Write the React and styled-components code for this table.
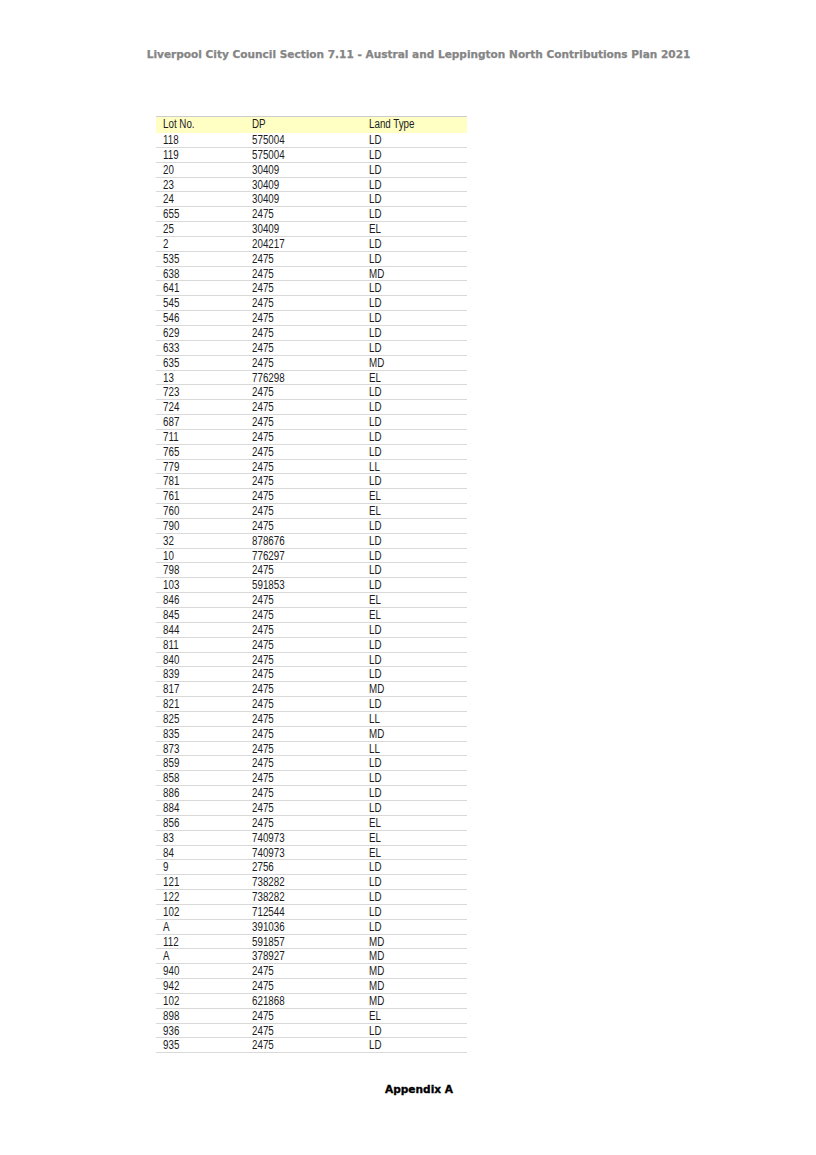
import React from 'react'
import styled, { createGlobalStyle } from 'styled-components'

const rows = [
  ['118', '575004', 'LD'],
  ['119', '575004', 'LD'],
  ['20', '30409', 'LD'],
  ['23', '30409', 'LD'],
  ['24', '30409', 'LD'],
  ['655', '2475', 'LD'],
  ['25', '30409', 'EL'],
  ['2', '204217', 'LD'],
  ['535', '2475', 'LD'],
  ['638', '2475', 'MD'],
  ['641', '2475', 'LD'],
  ['545', '2475', 'LD'],
  ['546', '2475', 'LD'],
  ['629', '2475', 'LD'],
  ['633', '2475', 'LD'],
  ['635', '2475', 'MD'],
  ['13', '776298', 'EL'],
  ['723', '2475', 'LD'],
  ['724', '2475', 'LD'],
  ['687', '2475', 'LD'],
  ['711', '2475', 'LD'],
  ['765', '2475', 'LD'],
  ['779', '2475', 'LL'],
  ['781', '2475', 'LD'],
  ['761', '2475', 'EL'],
  ['760', '2475', 'EL'],
  ['790', '2475', 'LD'],
  ['32', '878676', 'LD'],
  ['10', '776297', 'LD'],
  ['798', '2475', 'LD'],
  ['103', '591853', 'LD'],
  ['846', '2475', 'EL'],
  ['845', '2475', 'EL'],
  ['844', '2475', 'LD'],
  ['811', '2475', 'LD'],
  ['840', '2475', 'LD'],
  ['839', '2475', 'LD'],
  ['817', '2475', 'MD'],
  ['821', '2475', 'LD'],
  ['825', '2475', 'LL'],
  ['835', '2475', 'MD'],
  ['873', '2475', 'LL'],
  ['859', '2475', 'LD'],
  ['858', '2475', 'LD'],
  ['886', '2475', 'LD'],
  ['884', '2475', 'LD'],
  ['856', '2475', 'EL'],
  ['83', '740973', 'EL'],
  ['84', '740973', 'EL'],
  ['9', '2756', 'LD'],
  ['121', '738282', 'LD'],
  ['122', '738282', 'LD'],
  ['102', '712544', 'LD'],
  ['A', '391036', 'LD'],
  ['112', '591857', 'MD'],
  ['A', '378927', 'MD'],
  ['940', '2475', 'MD'],
  ['942', '2475', 'MD'],
  ['102', '621868', 'MD'],
  ['898', '2475', 'EL'],
  ['936', '2475', 'LD'],
  ['935', '2475', 'LD'],
]

const GlobalStyle = createGlobalStyle`
  html, body {
    margin: 0;
    padding: 0;
    background: #ffffff;
  }
`

const Page = styled.div`
  width: 816px;
  height: 1155px;
  display: flex;
  flex-direction: column;
  align-items: center;
  background: #ffffff;
`

const RunningHead = styled.div`
  margin-top: 47px;
  margin-left: 21px;
  font-family: 'DejaVu Sans', Verdana, sans-serif;
  font-weight: bold;
  font-size: 10.55px;
  line-height: 15px;
  color: #858585;
  white-space: nowrap;
  -webkit-text-stroke: 0.25px #858585;
`

const Sheet = styled.div`
  margin-top: 54px;
  margin-left: -194px;
  width: 311px;
  border-top: 1px solid #cdcdcd;
  font-family: 'Liberation Sans Narrow', 'Arial Narrow', 'Liberation Sans', sans-serif;
  font-size: 12px;
  color: #1c1c1c;
`

const Row = styled.div`
  display: grid;
  grid-template-columns: 89px 117px 1fr;
  height: ${(p) => (p.$head ? '16px' : '14.85px')};
  align-items: center;
  background: ${(p) => (p.$head ? '#ffffc4' : 'transparent')};
  border-bottom: 1px solid ${(p) => (p.$head ? '#ffffc4' : '#d9d9d9')};
  box-sizing: border-box;
`

const Cell = styled.div`
  padding-left: 7px;
  padding-top: ${(p) => (p.$head ? '0' : '1px')};
  line-height: 13px;
  white-space: nowrap;
`

const Narrow = styled.span`
  display: inline-block;
  transform: scaleX(0.815);
  transform-origin: left center;
`

const Footer = styled.div`
  margin-top: auto;
  margin-bottom: 60px;
  margin-left: 22px;
  font-family: 'DejaVu Sans', Verdana, sans-serif;
  font-weight: 900;
  font-size: 10.6px;
  color: #000000;
  -webkit-text-stroke: 0.3px #000000;
`

export default function App() {
  return (
    <Page>
      <GlobalStyle />
      <RunningHead>
        Liverpool City Council Section 7.11 - Austral and Leppington North Contributions Plan 2021
      </RunningHead>
      <Sheet>
        <Row $head>
          <Cell $head><Narrow>Lot No.</Narrow></Cell>
          <Cell $head><Narrow>DP</Narrow></Cell>
          <Cell $head><Narrow>Land Type</Narrow></Cell>
        </Row>
        {rows.map((r, i) => (
          <Row key={i}>
            <Cell><Narrow>{r[0]}</Narrow></Cell>
            <Cell><Narrow>{r[1]}</Narrow></Cell>
            <Cell><Narrow>{r[2]}</Narrow></Cell>
          </Row>
        ))}
      </Sheet>
      <Footer>Appendix A</Footer>
    </Page>
  )
}
